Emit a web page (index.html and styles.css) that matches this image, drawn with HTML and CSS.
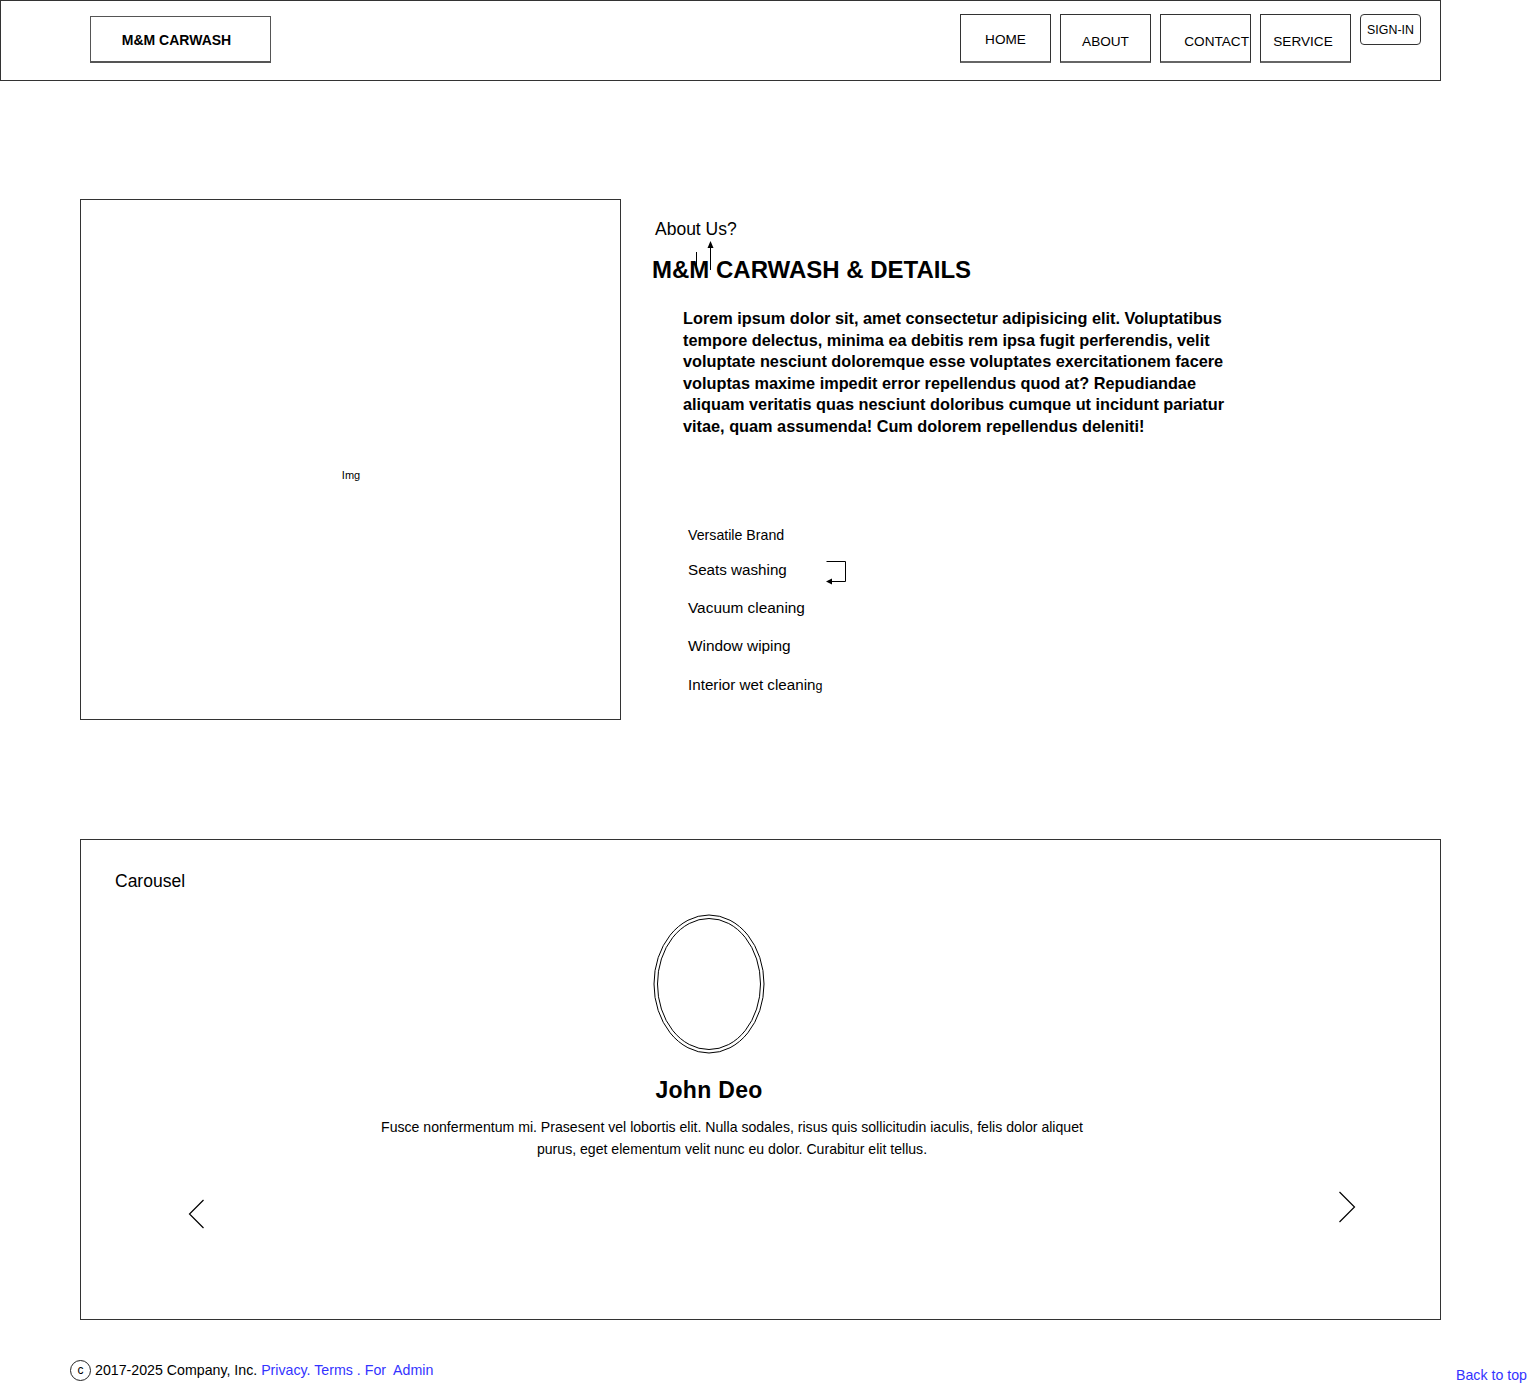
FILE: index.html
```html
<!DOCTYPE html>
<html lang="en">
<head>
<meta charset="utf-8">
<title>M&amp;M Carwash</title>
<link rel="stylesheet" href="styles.css">
</head>
<body>
<header class="topbar">
  <div class="logo">M&amp;M CARWASH</div>
  <nav class="nav">
    <a class="nav-btn nav-home">HOME</a>
    <a class="nav-btn nav-low">ABOUT</a>
    <a class="nav-btn nav-low nav-contact">CONTACT</a>
    <a class="nav-btn nav-low nav-service">SERVICE</a>
    <a class="signin">SIGN-IN</a>
  </nav>
</header>

<section class="about">
  <div class="img-box">Img</div>
  <div class="about-text">
    <div class="about-label">About Us?</div>
    <h1 class="about-title">M&amp;M CARWASH &amp; DETAILS
      <svg class="title-arrow" width="24" height="36" viewBox="0 0 24 36">
        <line x1="4.5" y1="12" x2="4.5" y2="31" stroke="#000" stroke-width="1"/>
        <line x1="18.5" y1="6" x2="18.5" y2="30" stroke="#000" stroke-width="1"/>
        <polygon points="18.5,1 15.5,8 21.5,8" fill="#000"/>
      </svg>
    </h1>
    <p class="about-para">Lorem ipsum dolor sit, amet consectetur adipisicing elit. Voluptatibus tempore delectus, minima ea debitis rem ipsa fugit perferendis, velit voluptate nesciunt doloremque esse voluptates exercitationem facere voluptas maxime impedit error repellendus quod at? Repudiandae aliquam veritatis quas nesciunt doloribus cumque ut incidunt pariatur vitae, quam assumenda! Cum dolorem repellendus deleniti!</p>
    <ul class="features">
      <li class="feat-small">Versatile Brand</li>
      <li class="with-arrow">Seats washing
        <svg class="item-arrow" width="24" height="26" viewBox="0 0 24 26">
          <polyline points="2.5,2.5 21.5,2.5 21.5,22.5 5,22.5" fill="none" stroke="#000" stroke-width="1"/>
          <polygon points="2,22.5 8,19.5 8,25.5" fill="#000"/>
        </svg>
      </li>
      <li>Vacuum cleaning</li>
      <li>Window wiping</li>
      <li>Interior wet cleanin<span class="small-g">g</span></li>
    </ul>
  </div>
</section>

<section class="carousel">
  <div class="carousel-label">Carousel</div>
  <div class="avatar">
    <svg width="112" height="140" viewBox="0 0 112 140">
      <ellipse cx="56" cy="70" rx="55" ry="69" fill="none" stroke="#000" stroke-width="1"/>
      <ellipse cx="56" cy="70" rx="51.5" ry="65.5" fill="none" stroke="#000" stroke-width="1"/>
    </svg>
  </div>
  <div class="person-name">John Deo</div>
  <p class="quote">Fusce nonfermentum mi. Prasesent vel lobortis elit. Nulla sodales, risus quis sollicitudin iaculis, felis dolor aliquet purus, eget elementum velit nunc eu dolor. Curabitur elit tellus.</p>
  <div class="controls">
    <svg class="chev chev-left" width="18" height="30" viewBox="0 0 18 30">
      <polyline points="15.5,1 1.5,15 15.5,29" fill="none" stroke="#000" stroke-width="1.2"/>
    </svg>
    <svg class="chev chev-right" width="18" height="32" viewBox="0 0 18 32">
      <polyline points="1.5,1 16.5,16 1.5,31" fill="none" stroke="#000" stroke-width="1.2"/>
    </svg>
  </div>
</section>

<footer class="footer">
  <div class="copy">
    <span class="copy-icon">c</span>
    <span>2017-2025 Company, Inc. <a class="link">Privacy.</a> <a class="link">Terms</a> <a class="link">. For&nbsp; Admin</a></span>
  </div>
  <a class="link back-top">Back to top</a>
</footer>
</body>
</html>
```

FILE: styles.css
```css
* { box-sizing: border-box; }

body {
  margin: 0;
  width: 1536px;
  font-family: "Liberation Sans", Arial, sans-serif;
  color: #000;
  background: #fff;
}

a { color: inherit; text-decoration: none; }

/* ---------- header ---------- */
.topbar {
  width: 1441px;
  height: 81px;
  border: 1px solid #333;
  display: flex;
  align-items: flex-start;
}

.logo {
  margin-left: 89px;
  margin-top: 15px;
  width: 181px;
  height: 47px;
  border: 1px solid #555;
  border-bottom-width: 2px;
  display: flex;
  align-items: center;
  justify-content: center;
  font-size: 14px;
  font-weight: bold;
  padding-right: 8px;
  padding-top: 2px;
}

.nav {
  margin-left: auto;
  margin-right: 19px;
  margin-top: 13px;
  display: flex;
  gap: 9px;
  align-items: flex-start;
}

.nav-btn {
  width: 91px;
  height: 49px;
  border: 1px solid #333;
  border-bottom: 2px solid #666;
  display: flex;
  align-items: center;
  justify-content: center;
  font-size: 13.6px;
  padding-top: 2px;
}

.nav-low { padding-top: 6px; }

.nav-contact {
  justify-content: flex-end;
  padding-right: 1px;
}

.nav-service { padding-right: 5px; }

.signin {
  width: 61px;
  height: 31px;
  border: 1px solid #333;
  border-radius: 4px;
  display: flex;
  align-items: center;
  justify-content: center;
  font-size: 12.4px;
}

/* ---------- about ---------- */
.about {
  display: flex;
  align-items: flex-start;
  padding-left: 80px;
  margin-top: 118px;
}

.img-box {
  width: 541px;
  height: 521px;
  border: 1px solid #333;
  display: flex;
  align-items: center;
  justify-content: center;
  font-size: 11px;
  padding-top: 30px;
  padding-left: 1px;
}

.about-text {
  margin-left: 31px;
  padding-top: 20px;
  width: 620px;
}

.about-label {
  font-size: 17.5px;
  line-height: 20px;
  margin-left: 3px;
}

.about-title {
  position: relative;
  margin: 18px 0 0 0;
  font-size: 24px;
  line-height: 26px;
  font-weight: bold;
}

.title-arrow {
  position: absolute;
  left: 40px;
  top: -17px;
}

.about-para {
  margin: 25px 0 0 31px;
  width: 556px;
  font-size: 16.3px;
  line-height: 21.6px;
  font-weight: bold;
}

.features {
  list-style: none;
  margin: 88px 0 0 36px;
  padding: 0;
  font-size: 15.2px;
}

.features li {
  line-height: 18px;
  height: 18px;
  position: relative;
}

.features li.feat-small { font-size: 14.2px; }

.features li:nth-child(1) { margin-bottom: 17px; }
.features li:nth-child(2) { margin-bottom: 20px; }
.features li:nth-child(3) { margin-bottom: 20px; font-size: 15.4px; }
.features li:nth-child(4) { margin-bottom: 21px; font-size: 15.4px; }

.item-arrow {
  position: absolute;
  left: 136px;
  top: -2px;
}

.small-g { font-size: 12.5px; }

/* ---------- carousel ---------- */
.carousel {
  margin: 119px 0 0 80px;
  width: 1361px;
  height: 481px;
  border: 1px solid #333;
  padding: 31px 0 0 0;
}

.carousel-label {
  margin-left: 34px;
  font-size: 17.5px;
  line-height: 20px;
}

.avatar {
  margin: 23px 0 0 572px;
  width: 112px;
  height: 140px;
}

.avatar svg { display: block; }

.person-name {
  margin: 23px 0 0 0;
  width: 1256px;
  text-align: center;
  font-size: 23px;
  line-height: 26px;
  font-weight: bold;
  letter-spacing: 0.3px;
}

.quote {
  margin: 13px 0 0 290px;
  width: 722px;
  text-align: center;
  font-size: 14.1px;
  line-height: 22px;
}

.controls {
  display: flex;
  justify-content: space-between;
  padding: 0 84px 0 107px;
  margin-top: 15px;
}

.chev { display: block; }
.chev-left { margin-top: 24px; }
.chev-right { margin-top: 16px; }

/* ---------- footer ---------- */
.footer {
  display: flex;
  align-items: flex-start;
  margin-top: 40px;
  padding-left: 70px;
  padding-right: 9px;
  font-size: 14.2px;
}

.copy {
  display: flex;
  align-items: center;
  gap: 4px;
  line-height: 21px;
}

.copy-icon {
  width: 21px;
  height: 21px;
  border: 1px solid #222;
  border-radius: 50%;
  display: inline-flex;
  align-items: center;
  justify-content: center;
  font-size: 12px;
  line-height: 1;
  padding-bottom: 2px;
}

.link { color: #3333ff; }

.back-top {
  margin-left: auto;
  margin-top: 5px;
  line-height: 21px;
}
```
